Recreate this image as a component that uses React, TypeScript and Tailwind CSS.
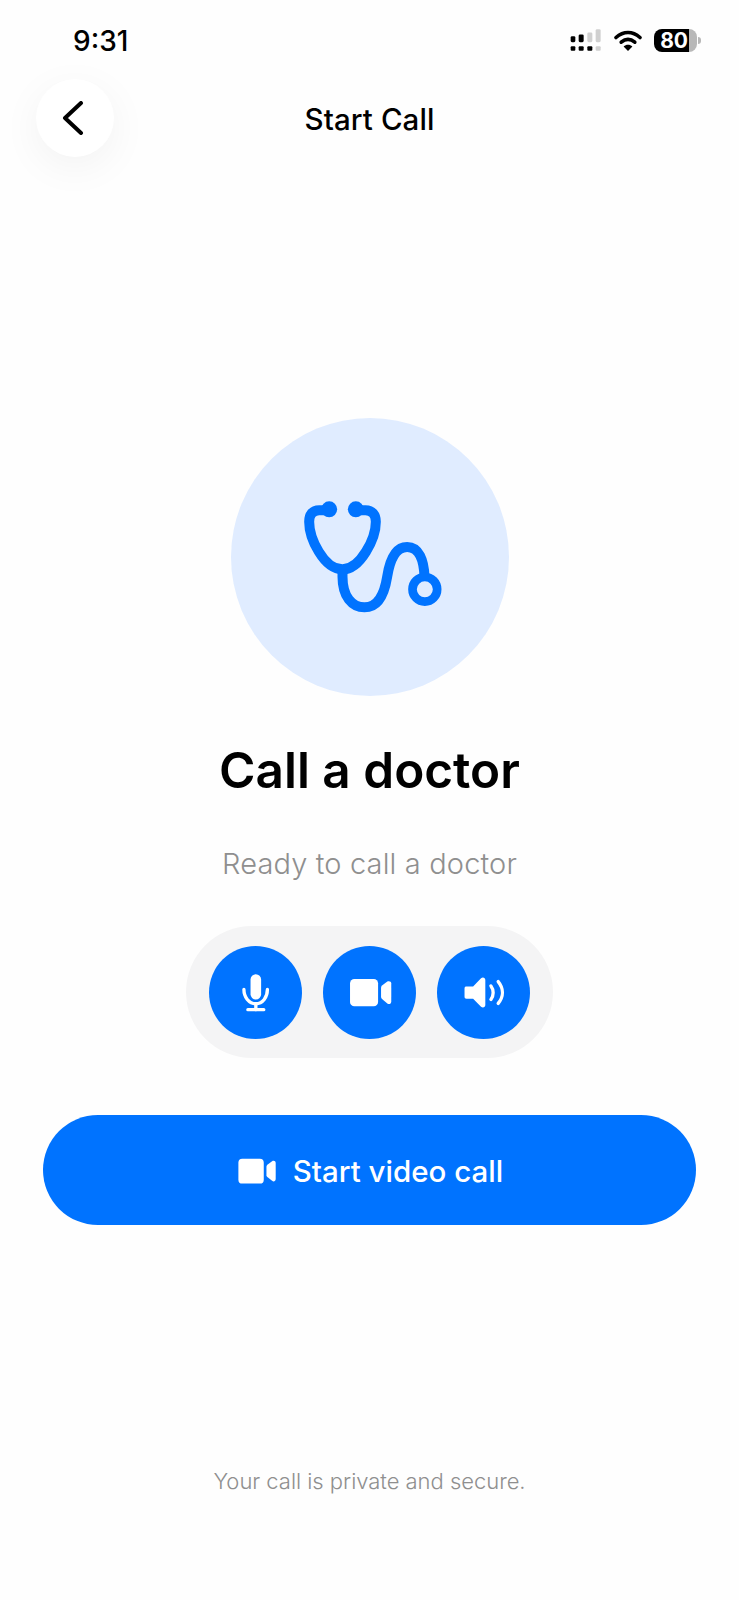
import React from "react";

const sans = "font-['Inter','Liberation_Sans',sans-serif]";

function Signal() {
  return (
    <svg width="32" height="23" viewBox="60 42 96 68">
      <g fill="#000">
        <rect x="62" y="63" width="14" height="18" rx="4" />
        <rect x="86" y="58" width="15" height="23" rx="4" />
        <rect x="62" y="93" width="14" height="14" rx="3" />
        <rect x="86" y="93" width="15" height="14" rx="3" />
        <rect x="112" y="93" width="15" height="14" rx="3" />
      </g>
      <g fill="#d0d0d0">
        <rect x="112" y="52" width="15" height="29" rx="4" />
        <rect x="137" y="42" width="15" height="39" rx="4" />
        <rect x="137" y="93" width="15" height="14" rx="3" />
      </g>
    </svg>
  );
}

function Wifi() {
  return (
    <svg width="28" height="21" viewBox="0 0 28 21">
      <path d="M2 7.5C9.5 .8 18.5 .8 26 7.5" fill="none" stroke="#000" strokeWidth="3.6" strokeLinecap="round" />
      <path d="M7.2 12.2C11.6 8.4 16.4 8.4 20.8 12.2" fill="none" stroke="#000" strokeWidth="3.6" strokeLinecap="round" />
      <path d="M14 21L9.6 16.4C12.2 14.2 15.8 14.2 18.4 16.4Z" fill="#000" />
    </svg>
  );
}

function Stethoscope() {
  return (
    <svg width="149" height="120" viewBox="224 261 446 360" fill="none" stroke="#0073ff" strokeWidth="30">
      <circle cx="326" cy="298" r="24" fill="#0073ff" stroke="none" />
      <circle cx="406" cy="298" r="24" fill="#0073ff" stroke="none" />
      <path d="M315 301H296C275 301 266 315 266 335C266 385 310 478 366 478C420 478 466 385 466 335C466 315 456 301 435 301H420" />
      <path d="M366 478V500C366 560 395 592 432 592C475 592 492 550 500 500C508 450 525 411 560 411C595 411 610 450 612 500" />
      <circle cx="613" cy="538" r="37" strokeWidth="26" />
    </svg>
  );
}

function Mic() {
  return (
    <svg width="31" height="43" viewBox="210 180 92 130" fill="none" stroke="#fff" strokeWidth="10" strokeLinecap="round">
      <rect x="241" y="190" width="32" height="76" rx="16" fill="#fff" stroke="none" />
      <path d="M221 236C221 259 236 279 257 279C278 279 292 259 292 236" />
      <path d="M257 279V297" />
      <path d="M233 297H281" />
    </svg>
  );
}

function Video({ w, h }: { w: number; h: number }) {
  return (
    <svg width={w} height={h} viewBox="532 196 134 100" fill="#fff">
      <rect x="540" y="205" width="85" height="83" rx="13" />
      <path d="M634 232C634 229 635 227 637 225L653 213C658 210 665 212 665 219V273C665 280 658 283 653 279L637 266C635 264 634 262 634 260Z" />
    </svg>
  );
}

function Speaker() {
  return (
    <svg width="44" height="33" viewBox="875 196 132 100" fill="none">
      <path d="M888 228H908L932 203C938 198 945 202 945 208V284C945 290 938 294 932 289L908 265H888C884 265 882 263 882 259V234C882 230 884 228 888 228Z" fill="#fff" />
      <path d="M962 226C971 238 971 255 962 267" stroke="#fff" strokeWidth="10" strokeLinecap="round" />
      <path d="M984 213C1001 234 1001 258 984 279" stroke="#fff" strokeWidth="10" strokeLinecap="round" />
    </svg>
  );
}

function Round({ children }: { children: React.ReactNode }) {
  return (
    <button className="flex h-[93px] w-[93px] items-center justify-center rounded-full bg-[#0073ff]">{children}</button>
  );
}

export default function App() {
  return (
    <div className={`${sans} flex h-[1600px] w-[739px] flex-col items-center overflow-hidden bg-[#fefefe] text-black`}>
      <div className="flex h-[79px] w-full items-start justify-between pt-[25px] pl-[73px] pr-[38px]">
        <span className="text-[28px] leading-[33px] font-medium">9:31</span>
        <div className="flex items-center pt-[4px]">
          <Signal />
          <div className="ml-[12px]">
            <Wifi />
          </div>
          <div className="ml-[12px] flex h-[23px] w-[43px] overflow-hidden rounded-[8px]">
            <div className="flex w-[35px] items-center justify-end bg-black pr-[1px] text-[21px] leading-none font-bold text-white">80</div>
            <div className="flex-1 bg-[#b8b8b8]" />
          </div>
          <div className="ml-[1px] h-[7px] w-[3px] rounded-r-full bg-[#b8b8b8]" />
        </div>
      </div>

      <div className="relative flex h-[78px] w-full items-center justify-center pt-[3px]">
        <button className="absolute left-[36px] top-0 flex h-[78px] w-[78px] items-center justify-center rounded-full bg-white shadow-[0_10px_40px_rgba(0,0,0,0.05)]">
          <svg width="24" height="34" viewBox="0 0 24 34" fill="none" stroke="#000" strokeWidth="4" strokeLinecap="round" strokeLinejoin="round" className="mr-[5px]">
            <path d="M20 2L4 17L20 32" />
          </svg>
        </button>
        <h1 className="text-[29.5px] leading-none font-medium tracking-[0.1px]">Start Call</h1>
      </div>

      <div className="mt-[261px] flex h-[278px] w-[278px] items-center justify-center rounded-full bg-[#e0ecff]">
        <Stethoscope />
      </div>

      <h2 className="mt-[44px] text-[49.5px] leading-[60px] font-semibold">Call a doctor</h2>
      <p className="mt-[46px] text-[29px] leading-[36px] font-light tracking-[0.15px] text-[#8f8f8f]">Ready to call a doctor</p>

      <div className="mt-[44px] flex h-[132px] w-[367px] items-center justify-center gap-[21px] rounded-[66px] bg-[#f4f4f5]">
        <Round><Mic /></Round>
        <Round><Video w={45} h={33} /></Round>
        <Round><Speaker /></Round>
      </div>

      <button className="mt-[57px] flex h-[110px] w-[653px] items-center justify-center gap-[17px] rounded-[55px] bg-[#0073ff] text-white">
        <div className="pt-[2px]">
          <Video w={40} h={30} />
        </div>
        <span className="pt-[3px] text-[29.5px] leading-none font-medium">Start video call</span>
      </button>

      <p className="mt-[242px] text-[22px] leading-[28px] font-light tracking-[-0.03px] text-[#8f8f8f]">Your call is private and secure.</p>
    </div>
  );
}
